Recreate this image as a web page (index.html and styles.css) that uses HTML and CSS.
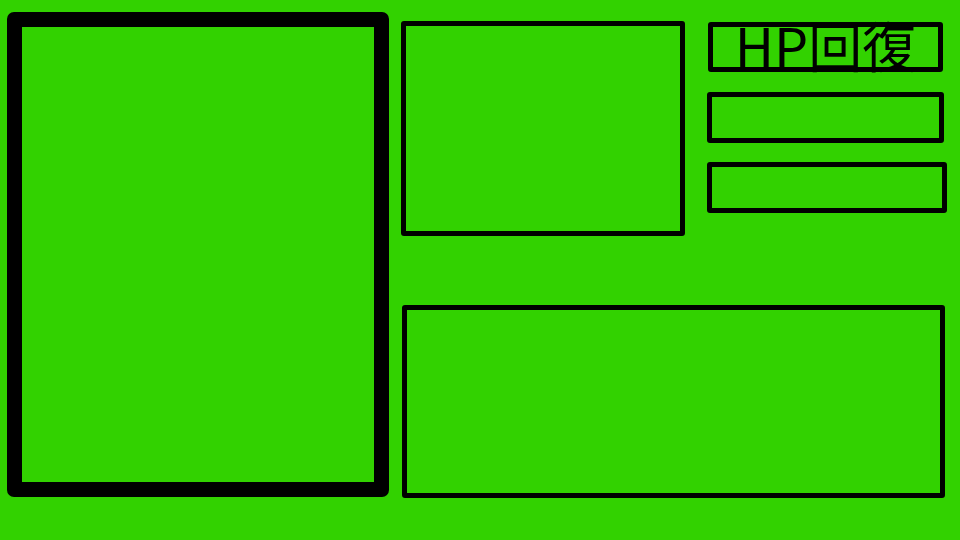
FILE: index.html
```html
<!DOCTYPE html>
<html lang="ja">
<head>
    <meta charset="UTF-8">
    <meta name="viewport" content="width=device-width, initial-scale=1.0">
    <title>HP回復</title>
    <link rel="stylesheet" href="styles.css">
</head>
<body>
    <div class="page">
        <!-- Marco grande de la izquierda -->
        <div class="big"></div>

        <div class="right">
            <div class="top-row">
                <div class="box screen"></div>

                <!-- Menú de acciones -->
                <div class="menu">
                    <div class="box hp">HP回復</div>
                    <div class="box slot-a"></div>
                    <div class="box slot-b"></div>
                </div>
            </div>

            <div class="box log"></div>
        </div>
    </div>
</body>
</html>
```

FILE: styles.css
```css
* {
    box-sizing: border-box;
}

body {
    margin: 0;
    width: 960px;
    height: 540px;
    overflow: hidden;
    background-color: #32d200;
    font-family: "Noto Sans CJK JP", "Noto Sans", sans-serif;
}

.page {
    display: flex;
    align-items: flex-start;
    padding: 12px 0 0 7px;
}

.big {
    width: 382px;
    height: 485px;
    border: 15px solid #000;
    border-radius: 7px;
}

.right {
    display: flex;
    flex-direction: column;
    margin-left: 12px;
}

.top-row {
    display: flex;
    align-items: flex-start;
    margin-top: 9px;
}

.box {
    border: 5px solid #000;
    border-radius: 3px;
}

.screen {
    width: 284px;
    height: 215px;
}

.menu {
    display: flex;
    flex-direction: column;
    margin-left: 22px;
    margin-top: 1px;
}

.hp {
    display: flex;
    justify-content: center;
    align-items: center;
    width: 235px;
    height: 50px;
    margin-left: 1px;
    padding-bottom: 5px;
    font-size: 54px;
    line-height: 40px;
    color: #000;
    white-space: nowrap;
}

.slot-a {
    width: 237px;
    height: 51px;
    margin-top: 20px;
}

.slot-b {
    width: 240px;
    height: 51px;
    margin-top: 19px;
}

.log {
    width: 543px;
    height: 193px;
    margin-top: 69px;
    margin-left: 1px;
}
```
